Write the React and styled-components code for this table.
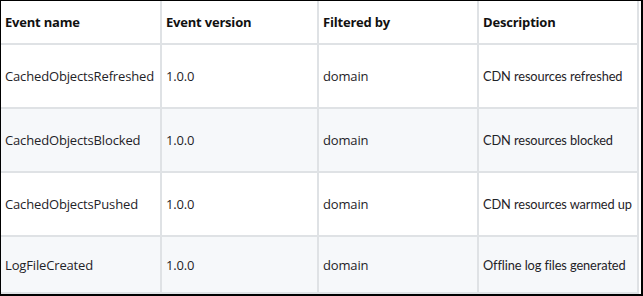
import React from "react";
import styled, { createGlobalStyle } from "styled-components";

const Global = createGlobalStyle`
  html, body { margin: 0; padding: 0; background: #fff; }
  body { font-family: "Open Sans", "Noto Sans", sans-serif; }
`;

const Frame = styled.div`
  box-sizing: border-box;
  width: 643px;
  height: 296px;
  border: 1px solid #000;
  border-right-width: 2px;
  border-bottom-width: 2px;
  overflow: hidden;
  background: #fff;
`;

const Table = styled.table`
  border-collapse: separate;
  border-spacing: 0;
  table-layout: fixed;
  width: 638px;
  color: #1f2328;
`;

const Row = styled.tr`
  height: ${(p) => p.$h}px;
  background: ${(p) => (p.$striped ? "#f6f8fa" : "#fff")};
`;

const Cell = styled.td`
  box-sizing: border-box;
  width: ${(p) => p.$w}px;
  padding: 0 4px;
  border-right: 2px solid #dfe2e5;
  border-bottom: 2px solid #dfe2e5;
  vertical-align: middle;
  text-align: left;
  white-space: nowrap;
  overflow: hidden;
  font-family: ${(p) =>
    p.$alt ? '"Lato", "Liberation Sans", sans-serif' : '"Open Sans", "Noto Sans", sans-serif'};
  font-size: ${(p) => (p.$alt ? "12.8px" : "13px")};
  letter-spacing: ${(p) => (p.$alt ? "-0.1px" : "-0.15px")};
`;

const Head = styled.th`
  box-sizing: border-box;
  width: ${(p) => p.$w}px;
  padding: 0 4px;
  border-right: 2px solid #dfe2e5;
  border-bottom: 2px solid #dfe2e5;
  vertical-align: middle;
  text-align: left;
  font-family: "Open Sans", "Noto Sans", sans-serif;
  font-weight: 700;
  font-size: 13px;
  letter-spacing: -0.2px;
  color: #111;
  white-space: nowrap;
`;

const widths = [161, 157, 160, 160];

const rows = [
  ["CachedObjectsRefreshed", "1.0.0", "domain", "CDN resources refreshed"],
  ["CachedObjectsBlocked", "1.0.0", "domain", "CDN resources blocked"],
  ["CachedObjectsPushed", "1.0.0", "domain", "CDN resources warmed up"],
  ["LogFileCreated", "1.0.0", "domain", "Offline log files generated"],
];

const headers = ["Event name", "Event version", "Filtered by", "Description"];

export default function App() {
  return (
    <>
      <Global />
      <Frame>
        <Table>
          <thead>
            <Row $h={44}>
              {headers.map((h, j) => (
                <Head key={h} $w={widths[j]}>{h}</Head>
              ))}
            </Row>
          </thead>
          <tbody>
            {rows.map((r, i) => (
              <Row key={r[0]} $h={i === 3 ? 57 : 64} $striped={i % 2 === 1}>
                {r.map((c, j) => (
                  <Cell key={j} $w={widths[j]} $alt={j === 3}>{c}</Cell>
                ))}
              </Row>
            ))}
          </tbody>
        </Table>
      </Frame>
    </>
  );
}
